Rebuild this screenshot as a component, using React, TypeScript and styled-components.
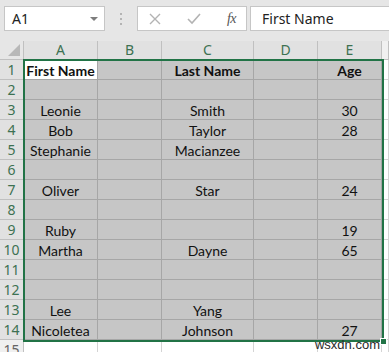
import React from 'react'
import styled, { createGlobalStyle } from 'styled-components'

const GlobalStyle = createGlobalStyle`
    body {
        margin: 0;
        background: #ffffff;
        font-family: 'Lato', 'Liberation Sans', sans-serif;
    }
`

const Page = styled.div`
    width: 389px;
    height: 352px;
    overflow: hidden;
    display: flex;
    flex-direction: column;
`

const FormulaBar = styled.div`
    height: 41px;
    flex: none;
    box-sizing: border-box;
    background: #e6e6e6;
    display: flex;
    align-items: flex-start;
    padding: 6px 0 0 4px;
`

const Box = styled.div`
    height: 25px;
    box-sizing: border-box;
    background: #ffffff;
    border: 1px solid #c6c6c6;
    display: flex;
    align-items: center;
`

const NameBox = styled(Box)`
    width: 101px;
    padding: 0 6px 0 7px;
    justify-content: space-between;
    font-family: 'Noto Sans', 'Open Sans', sans-serif;
    font-size: 14px;
    color: #222;
`

const DropArrow = styled.span`
    width: 0;
    height: 0;
    border-left: 4px solid transparent;
    border-right: 4px solid transparent;
    border-top: 4px solid #7d7d7d;
`

const Grip = styled.div`
    width: 3px;
    margin: 7px 14px 0 15px;
    display: flex;
    flex-direction: column;
    gap: 3px;

    span {
        width: 2px;
        height: 2px;
        background: #b4b4b4;
    }
`

const ButtonsBox = styled(Box)`
    width: 110px;
    padding: 0 10px 0 11px;
    justify-content: space-between;
`

const Fx = styled.span`
    font-family: 'Liberation Serif', serif;
    font-style: italic;
    font-size: 14px;
    color: #555;
    letter-spacing: -0.5px;
`

const FormulaInput = styled(Box)`
    flex: 1;
    margin-left: 3px;
    margin-right: -2px;
    padding-left: 11px;
    font-family: 'Noto Sans', 'Open Sans', sans-serif;
    font-size: 14px;
    color: #222;
`

const Sheet = styled.div`
    position: relative;
    flex: 1;
    min-height: 0;
    display: grid;
    grid-template-columns: 24px 74px 64px 92px 64px 64px 1fr;
    grid-auto-rows: 20px;
    grid-template-rows: 19px;
`

const Corner = styled.div`
    background: #e6e6e6;
    border-right: 1px solid #c0c0c0;
    border-bottom: 1px solid #c0c0c0;
    box-sizing: border-box;
    position: relative;

    &::after {
        content: '';
        position: absolute;
        right: 3px;
        bottom: 3px;
        width: 0;
        height: 0;
        border-left: 12px solid transparent;
        border-bottom: 12px solid #b8b8b8;
    }
`

const Header = styled.div<{ $active?: boolean }>`
    box-sizing: border-box;
    background: ${p => (p.$active ? '#e1e1e1' : '#f0f0f0')};
    color: ${p => (p.$active ? '#3d7152' : '#666')};
    border-right: 1px solid #c0c0c0;
    border-bottom: 1px solid #c0c0c0;
    font-family: 'Noto Sans', 'Open Sans', sans-serif;
    font-size: 14px;
    display: flex;
    align-items: center;
    justify-content: center;
    line-height: 1;
`

const Cell = styled.div<{ $selected?: boolean; $active?: boolean; $bold?: boolean }>`
    box-sizing: border-box;
    background: ${p => (p.$active ? '#ffffff' : p.$selected ? '#c6c6c6' : '#ffffff')};
    border-right: 1px solid ${p => (p.$selected ? '#a6a6a6' : '#d4d4d4')};
    border-bottom: 1px solid ${p => (p.$selected ? '#a6a6a6' : '#d4d4d4')};
    display: flex;
    align-items: flex-end;
    justify-content: center;
    font-size: 14px;
    line-height: 17px;
    font-weight: ${p => (p.$bold ? 700 : 400)};
    color: #111;
    white-space: nowrap;
    overflow: hidden;
`

const Selection = styled.div`
    position: absolute;
    left: 23px;
    top: 18px;
    width: 361px;
    height: 283px;
    box-sizing: border-box;
    border: 2px solid #217346;
    pointer-events: none;
`

const FillHandle = styled.div`
    position: absolute;
    right: -5px;
    bottom: -5px;
    width: 7px;
    height: 7px;
    box-sizing: border-box;
    background: #217346;
    border: 1px solid #ffffff;
`

const Watermark = styled.div`
    position: absolute;
    right: 9px;
    top: 297px;
    font-family: 'Liberation Sans', sans-serif;
    font-size: 13px;
    line-height: 13px;
    color: #2a2a2a;
`

const columns = ['A', 'B', 'C', 'D', 'E', '']

const rows: string[][] = [
    ['First Name', '', 'Last Name', '', 'Age'],
    [],
    ['Leonie', '', 'Smith', '', '30'],
    ['Bob', '', 'Taylor', '', '28'],
    ['Stephanie', '', 'Macianzee', '', ''],
    [],
    ['Oliver', '', 'Star', '', '24'],
    [],
    ['Ruby', '', '', '', '19'],
    ['Martha', '', 'Dayne', '', '65'],
    [],
    [],
    ['Lee', '', 'Yang', '', ''],
    ['Nicoletea', '', 'Johnson', '', '27'],
    [],
]

const Cross = () => (
    <svg width="12" height="12" viewBox="0 0 12 12">
        <path d="M1 1 L11 11 M11 1 L1 11" stroke="#b3b3b3" strokeWidth="1.4" fill="none" />
    </svg>
)

const Check = () => (
    <svg width="14" height="12" viewBox="0 0 14 12">
        <path d="M1 6 L5 10 L13 1" stroke="#b3b3b3" strokeWidth="1.6" fill="none" />
    </svg>
)

const App = () => {
    return (
        <Page>
            <GlobalStyle />
            <FormulaBar>
                <NameBox>
                    A1
                    <DropArrow />
                </NameBox>
                <Grip>
                    <span />
                    <span />
                    <span />
                </Grip>
                <ButtonsBox>
                    <Cross />
                    <Check />
                    <Fx>fx</Fx>
                </ButtonsBox>
                <FormulaInput>First Name</FormulaInput>
            </FormulaBar>
            <Sheet>
                <Corner />
                {columns.map((c, i) => (
                    <Header key={i} $active={i < 5}>{c}</Header>
                ))}
                {rows.map((row, r) => {
                    const inSel = r < 14
                    return (
                        <React.Fragment key={r}>
                            <Header $active={inSel}>{r + 1}</Header>
                            {columns.map((_, c) => (
                                <Cell
                                    key={c}
                                    $selected={inSel && c < 5}
                                    $active={r === 0 && c === 0}
                                    $bold={r === 0}
                                >
                                    {row[c] || ''}
                                </Cell>
                            ))}
                        </React.Fragment>
                    )
                })}
                <Selection>
                    <FillHandle />
                </Selection>
                <Watermark>wsxdn.com</Watermark>
            </Sheet>
        </Page>
    )
}

export default App
